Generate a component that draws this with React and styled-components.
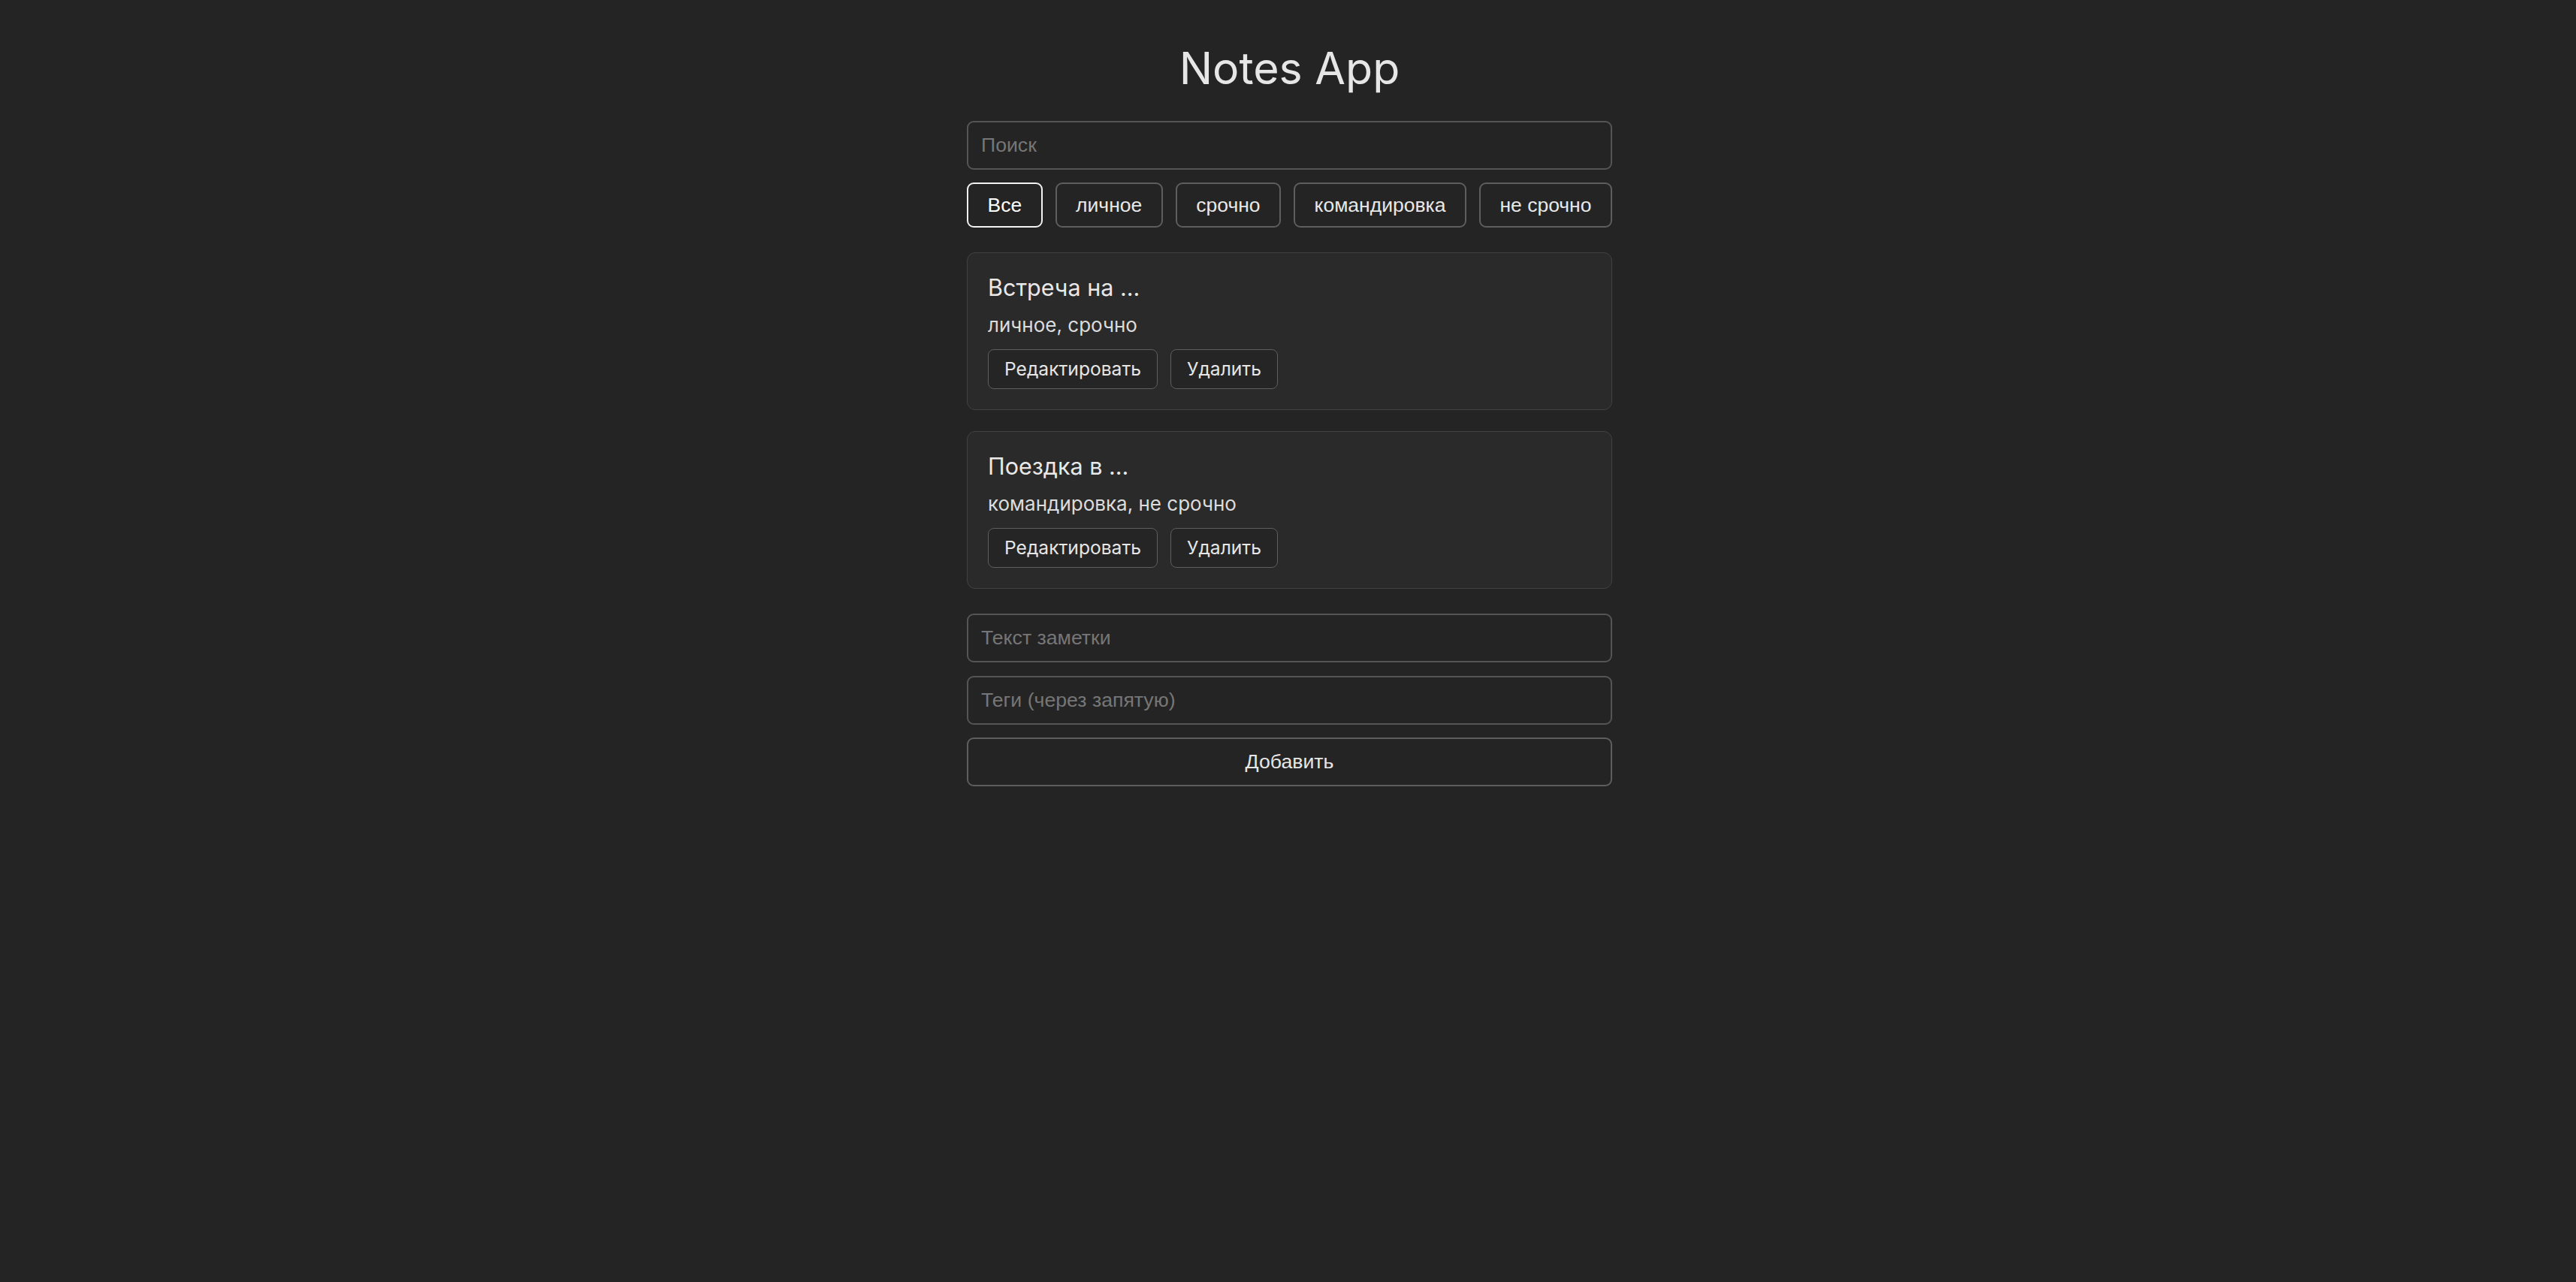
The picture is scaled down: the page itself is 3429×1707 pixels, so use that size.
import { useState } from "react";
import styled, { createGlobalStyle } from "styled-components";

const GlobalStyle = createGlobalStyle`
	html, body {
		margin: 0;
		background: #242424;
	}
	body {
		font-family: Inter, "Noto Sans", sans-serif;
		color: rgba(255, 255, 255, 0.87);
	}
`;

const TAGS = ["Все", "личное", "срочно", "командировка", "не срочно"];

const NOTES = [
	{ id: 1, title: "Встреча на ...", tags: ["личное", "срочно"] },
	{ id: 2, title: "Поездка в ...", tags: ["командировка", "не срочно"] },
];

const App = () => {
	const [activeTag, setActiveTag] = useState("Все");

	return (
		<S.Page>
			<GlobalStyle />
			<S.Container>
				<S.Title>Notes App</S.Title>
				<S.Field placeholder="Поиск" />
				<S.Filters>
					{TAGS.map(tag => (
						<S.FilterButton
							key={tag}
							$active={tag === activeTag}
							onClick={() => setActiveTag(tag)}
						>
							{tag}
						</S.FilterButton>
					))}
				</S.Filters>
				<S.NoteList>
					{NOTES.map(note => (
						<S.NoteCard key={note.id}>
							<S.NoteTitle>{note.title}</S.NoteTitle>
							<S.NoteTags>{note.tags.join(", ")}</S.NoteTags>
							<S.Actions>
								<S.ActionButton>Редактировать</S.ActionButton>
								<S.ActionButton>Удалить</S.ActionButton>
							</S.Actions>
						</S.NoteCard>
					))}
				</S.NoteList>
				<S.Form>
					<S.Field placeholder="Текст заметки" />
					<S.Field placeholder="Теги (через запятую)" />
					<S.AddButton>Добавить</S.AddButton>
				</S.Form>
			</S.Container>
		</S.Page>
	);
};

export default App;

const Page = styled.div`
	min-height: 100vh;
	box-sizing: border-box;
	padding: 57px 0 0 4px;
	display: flex;
	justify-content: center;
`;

const Container = styled.div`
	width: 859px;
	display: flex;
	flex-direction: column;
`;

const Title = styled.h1`
	margin: 0 0 37px;
	font-size: 59px;
	line-height: 67px;
	font-weight: 400;
	text-align: center;
	color: #e6e6e6;
`;

const Field = styled.input`
	box-sizing: border-box;
	width: 100%;
	height: 65px;
	padding: 0 17px;
	border: 2px solid #555;
	border-radius: 9px;
	background: #242424;
	color: #e6e6e6;
	font-family: "Liberation Sans", Arial, sans-serif;
	font-size: 26.67px;
	outline: none;
	&::placeholder {
		color: #767676;
	}
`;

const Filters = styled.div`
	display: flex;
	justify-content: space-between;
	gap: 14px;
	margin: 17px 0 33px;
`;

const FilterButton = styled.button`
	flex-shrink: 0;
	white-space: nowrap;
	padding: 13px 25.5px;
	border: 2px solid ${p => (p.$active ? "#f2f2f2" : "#5e5e5e")};
	border-radius: 9px;
	background: #242424;
	color: ${p => (p.$active ? "#ffffff" : "#e8e8e8")};
	font-family: "Liberation Sans", Arial, sans-serif;
	font-size: 26.5px;
	line-height: 30px;
	cursor: pointer;
`;

const NoteList = styled.div`
	display: flex;
	flex-direction: column;
	gap: 28px;
	margin-bottom: 33px;
`;

const NoteCard = styled.div`
	padding: 27px;
	border: 1px solid #424242;
	border-radius: 11px;
	background: #2a2a2a;
	display: flex;
	flex-direction: column;
`;

const NoteTitle = styled.h3`
	margin: 0 0 13px;
	font-size: 30.5px;
	line-height: 37px;
	font-weight: 400;
	color: #e8e8e8;
`;

const NoteTags = styled.p`
	margin: 0 0 14px;
	font-size: 26px;
	line-height: 37px;
	color: #dcdcdc;
`;

const Actions = styled.div`
	display: flex;
	gap: 17px;
`;

const ActionButton = styled.button`
	padding: 7px 21px;
	border: 1.5px solid #5e5e5e;
	border-radius: 8px;
	background: #252525;
	color: #e6e6e6;
	font-family: inherit;
	font-size: 24.6px;
	line-height: 37px;
	cursor: pointer;
`;

const Form = styled.div`
	display: flex;
	flex-direction: column;
	gap: 17.5px;
`;

const AddButton = styled.button`
	box-sizing: border-box;
	width: 100%;
	height: 65px;
	border: 2px solid #5e5e5e;
	border-radius: 9px;
	background: #242424;
	color: #e6e6e6;
	font-family: "Liberation Sans", Arial, sans-serif;
	font-size: 26.67px;
	cursor: pointer;
`;

const S = {
	Page,
	Container,
	Title,
	Field,
	Filters,
	FilterButton,
	NoteList,
	NoteCard,
	NoteTitle,
	NoteTags,
	Actions,
	ActionButton,
	Form,
	AddButton,
};
